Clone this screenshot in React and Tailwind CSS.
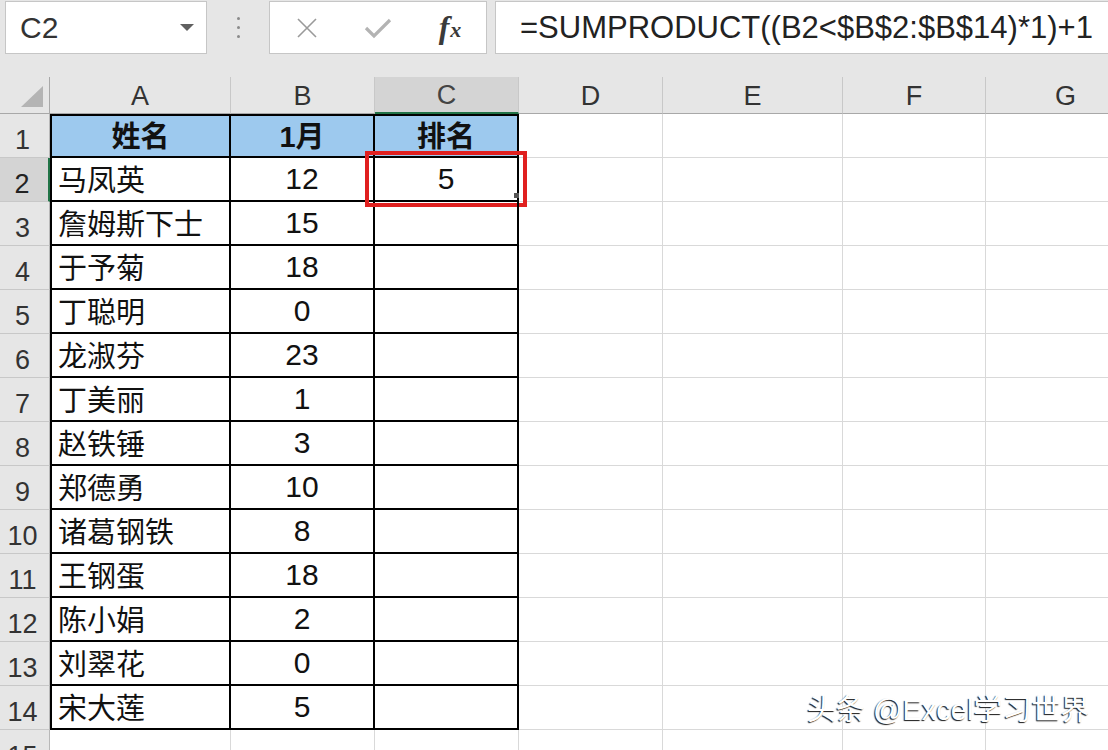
import React from "react";

const FONT = { fontFamily: '"Liberation Sans", "Noto Sans CJK SC", sans-serif' };

const rows = [
  ["马凤英", "12", "5"],
  ["詹姆斯下士", "15", ""],
  ["于予菊", "18", ""],
  ["丁聪明", "0", ""],
  ["龙淑芬", "23", ""],
  ["丁美丽", "1", ""],
  ["赵铁锤", "3", ""],
  ["郑德勇", "10", ""],
  ["诸葛钢铁", "8", ""],
  ["王钢蛋", "18", ""],
  ["陈小娟", "2", ""],
  ["刘翠花", "0", ""],
  ["宋大莲", "5", ""],
];

function RowHeader({ n, selected }) {
  return (
    <div
      className={
        "w-[50px] h-full shrink-0 flex items-end justify-center pb-[3px] pr-[4px] text-[27px] leading-none border-b border-[#c8c8c8] " +
        (selected
          ? "bg-[#d4d4d4] text-[#222] border-r-2 border-r-[#217346]"
          : "bg-[#e6e6e6] text-[#333] border-r border-r-[#b8b8b8]")
      }
    >
      {n}
    </div>
  );
}

function EmptyCells() {
  return (
    <>
      <div className="w-[144px] h-full shrink-0 border-r border-b border-[#d9d9d9]" />
      <div className="w-[180px] h-full shrink-0 border-r border-b border-[#d9d9d9]" />
      <div className="w-[143px] h-full shrink-0 border-r border-b border-[#d9d9d9]" />
      <div className="w-[160px] h-full shrink-0 border-r border-b border-[#d9d9d9]" />
    </>
  );
}

export default function App() {
  return (
    <div className="w-[1108px] h-[750px] overflow-hidden relative bg-white text-[#111]" style={FONT}>
      {/* Toolbar */}
      <div className="h-[77px] bg-[#e6e6e6] flex items-start pt-[1px]">
        <div className="ml-[5px] w-[202px] h-[53px] bg-white border border-[#c6c6c6] flex items-center pl-[14px] pr-[12px]">
          <span className="text-[30px] leading-none text-[#333] flex-1">C2</span>
          <svg width="14" height="8" viewBox="0 0 14 8">
            <path d="M0 0 L14 0 L7 7 Z" fill="#606060" />
          </svg>
        </div>
        <div className="w-[62px] h-[53px] flex flex-col items-center justify-center gap-[6px]">
          <div className="w-[3px] h-[3px] rounded-full bg-[#8a8a8a]" />
          <div className="w-[3px] h-[3px] rounded-full bg-[#8a8a8a]" />
          <div className="w-[3px] h-[3px] rounded-full bg-[#8a8a8a]" />
        </div>
        <div className="w-[218px] h-[53px] bg-white border border-[#c6c6c6] flex items-center">
          <div className="w-[72px] flex justify-center pl-[2px]">
            <svg width="22" height="22" viewBox="0 0 22 22">
              <path d="M2 2 L20 20 M20 2 L2 20" stroke="#9a9a9a" strokeWidth="1.6" fill="none" />
            </svg>
          </div>
          <div className="w-[72px] flex justify-center">
            <svg width="28" height="22" viewBox="0 0 28 22">
              <path d="M2 11 L10 19 L26 3" stroke="#b3b3b3" strokeWidth="3.2" fill="none" strokeLinejoin="miter" />
            </svg>
          </div>
          <div className="w-[72px] flex justify-center items-end pb-[2px]">
            <span
              className="text-[32px] leading-none italic font-bold text-[#3a3a3a]"
              style={{ fontFamily: '"Liberation Serif", serif' }}
            >
              f
            </span>
            <span
              className="text-[22px] leading-none italic font-bold text-[#3a3a3a] ml-[1px] mb-[2px]"
              style={{ fontFamily: '"Liberation Serif", serif' }}
            >
              x
            </span>
          </div>
        </div>
        <div className="ml-[8px] flex-1 h-[53px] bg-white border border-[#c6c6c6] border-r-0 flex items-center pl-[24px] overflow-hidden whitespace-nowrap">
          <span className="text-[31px] leading-none text-[#222]">=SUMPRODUCT((B2&lt;$B$2:$B$14)*1)+1</span>
        </div>
      </div>

      {/* Column headers */}
      <div className="flex h-[37px] bg-[#e6e6e6] text-[27px] leading-none text-[#333]">
        <div className="w-[50px] shrink-0 border-r border-b border-[#a8a8a8] flex items-end justify-end pr-[6px] pb-[6px]">
          <svg width="22" height="21" viewBox="0 0 22 21">
            <path d="M0 21 L22 21 L22 0 Z" fill="#b4b4b4" />
          </svg>
        </div>
        <div className="w-[181px] shrink-0 border-r border-[#c8c8c8] border-b border-b-[#a8a8a8] flex items-center justify-center pt-[2px]">A</div>
        <div className="w-[144px] shrink-0 border-r border-[#c8c8c8] border-b border-b-[#a8a8a8] flex items-center justify-center pt-[2px]">B</div>
        <div className="w-[144px] shrink-0 border-r border-[#c8c8c8] border-b-2 border-b-[#217346] bg-[#d4d4d4] flex items-center justify-center pt-[2px] text-[#444]">C</div>
        <div className="w-[144px] shrink-0 border-r border-[#c8c8c8] border-b border-b-[#a8a8a8] flex items-center justify-center pt-[2px]">D</div>
        <div className="w-[180px] shrink-0 border-r border-[#c8c8c8] border-b border-b-[#a8a8a8] flex items-center justify-center pt-[2px]">E</div>
        <div className="w-[143px] shrink-0 border-r border-[#c8c8c8] border-b border-b-[#a8a8a8] flex items-center justify-center pt-[2px]">F</div>
        <div className="w-[160px] shrink-0 border-r border-[#c8c8c8] border-b border-b-[#a8a8a8] flex items-center justify-center pt-[2px]">G</div>
      </div>

      {/* Row 1 - header */}
      <div className="flex h-[44px]">
        <RowHeader n="1" />
        <div className="w-[181px] shrink-0 border-2 border-black bg-[#9dc9ee] flex items-center justify-center text-[29px] font-bold leading-none pt-[2px]">姓名</div>
        <div className="w-[144px] shrink-0 border-2 border-l-0 border-black bg-[#9dc9ee] flex items-center justify-center text-[29px] font-bold leading-none pt-[2px]">1月</div>
        <div className="w-[144px] shrink-0 border-2 border-l-0 border-black bg-[#9dc9ee] flex items-center justify-center text-[29px] font-bold leading-none pt-[2px]">排名</div>
        <EmptyCells />
      </div>

      {rows.map((r, i) => {
        const n = i + 2;
        return (
          <div key={n} className="flex h-[44px]">
            <RowHeader n={String(n)} selected={n === 2} />
            <div className="w-[181px] shrink-0 border-l-2 border-r-2 border-b-2 border-black flex items-end pl-[6px] pb-[4px] text-[29px] leading-none whitespace-nowrap">
              {r[0]}
            </div>
            <div className="w-[144px] shrink-0 border-r-2 border-b-2 border-black flex items-end justify-center pb-[6px] text-[30px] leading-none">
              {r[1]}
            </div>
            <div className="w-[144px] shrink-0 border-r-2 border-b-2 border-black flex items-end justify-center pb-[6px] text-[30px] leading-none relative">
              {r[2]}
              {n === 2 && (
                <>
                  <div className="absolute left-[-10px] right-[-10px] top-[-7px] bottom-[-7px] border-[4px] border-[#e0201f]" />
                  <div className="absolute right-[-2px] bottom-[2px] w-[5px] h-[5px] bg-[#555]" />
                </>
              )}
            </div>
            <EmptyCells />
          </div>
        );
      })}

      {/* Row 15 partial */}
      <div className="flex h-[44px]">
        <RowHeader n="15" />
        <div className="w-[181px] shrink-0 border-r border-b border-[#d9d9d9]" />
        <div className="w-[144px] shrink-0 border-r border-b border-[#d9d9d9]" />
        <div className="w-[144px] shrink-0 border-r border-b border-[#d9d9d9]" />
        <EmptyCells />
      </div>

      {/* Watermark */}
      <div
        className="absolute left-[807px] top-[696px] text-[29px] leading-none text-white whitespace-nowrap [text-shadow:-1px_1px_1px_#1a1a1a]"
        style={{ fontFamily: '"Liberation Sans", "Noto Sans CJK SC", sans-serif' }}
      >
        头条 @Excel学习世界
      </div>
    </div>
  );
}
